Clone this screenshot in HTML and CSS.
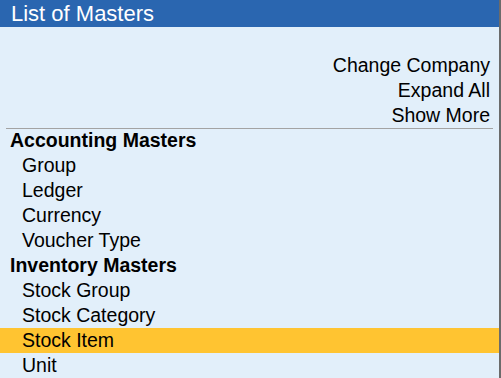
FILE: index.html
```html
<!DOCTYPE html>
<html>
<head>
<meta charset="utf-8">
<link rel="stylesheet" href="styles.css">
</head>
<body>
<div class="panel">
  <div class="title">List of Masters</div>
  <div class="actions">
    <div class="action">Change Company</div>
    <div class="action">Expand All</div>
    <div class="action">Show More</div>
  </div>
  <div class="list">
    <div class="group">Accounting Masters</div>
    <div class="item">Group</div>
    <div class="item">Ledger</div>
    <div class="item">Currency</div>
    <div class="item">Voucher Type</div>
    <div class="group">Inventory Masters</div>
    <div class="item">Stock Group</div>
    <div class="item">Stock Category</div>
    <div class="item selected">Stock Item</div>
    <div class="item">Unit</div>
  </div>
</div>
</body>
</html>
```
FILE: styles.css
```css
html, body {
  margin: 0;
  padding: 0;
  background: #e2effa;
}
body {
  width: 501px;
  height: 378px;
  overflow: hidden;
  font-family: "Liberation Sans", Arial, sans-serif;
  color: #000;
}
.panel {
  height: 378px;
  box-sizing: border-box;
  border-right: 2px solid #6b6b6b;
  background: #e2effa;
}
.title {
  height: 27px;
  background: #2a66b0;
  color: #fff;
  font-size: 22px;
  line-height: 27px;
  padding-left: 11px;
}
.actions {
  padding-top: 26px;
  margin: 0 6px 0 6px;
  border-bottom: 1px solid #a3a3a3;
  display: flex;
  flex-direction: column;
  align-items: flex-end;
  padding-right: 3px;
}
.action {
  height: 25px;
  line-height: 25px;
  font-size: 19.5px;
}
.list {
  display: flex;
  flex-direction: column;
  margin-top: -1px;
}
.group {
  height: 25px;
  line-height: 25px;
  font-size: 19.5px;
  font-weight: bold;
  padding-left: 10px;
}
.item {
  height: 25px;
  line-height: 25px;
  font-size: 19.5px;
  padding-left: 22px;
}
.selected {
  background: #ffc431;
}
```
